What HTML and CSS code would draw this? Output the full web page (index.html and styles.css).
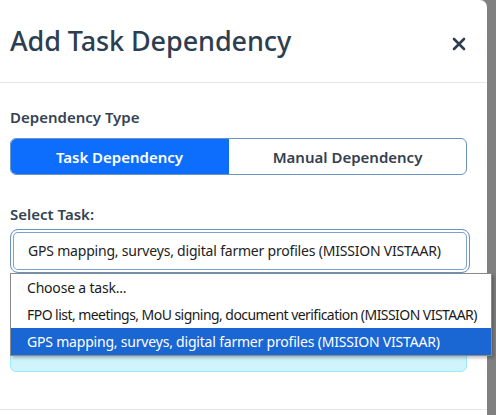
FILE: index.html
```html
<!DOCTYPE html>
<html>
<head>
<meta charset="utf-8">
<link rel="stylesheet" href="styles.css">
</head>
<body>
<div class="modal">
  <div class="modal-header">
    <h5 class="modal-title">Add Task Dependency</h5>
    <button class="close-btn" aria-label="Close">
      <svg width="14" height="14" viewBox="0 0 14 14"><path d="M2 2 L12 12 M12 2 L2 12" stroke="#2c3e50" stroke-width="2.6" stroke-linecap="round"/></svg>
    </button>
  </div>
  <div class="modal-body">
    <div class="field-label">Dependency Type</div>
    <div class="toggle">
      <div class="toggle-btn active">Task Dependency</div>
      <div class="toggle-btn">Manual Dependency</div>
    </div>
    <div class="field-label second">Select Task:</div>
    <div class="select-wrap">
      <div class="select">GPS mapping, surveys, digital farmer profiles (MISSION VISTAAR)</div>
      <div class="dropdown">
        <div class="option">Choose a task...</div>
        <div class="option long">FPO list, meetings, MoU signing, document verification (MISSION VISTAAR)</div>
        <div class="option selected">GPS mapping, surveys, digital farmer profiles (MISSION VISTAAR)</div>
      </div>
    </div>
    <div class="alert"></div>
  </div>
  <div class="modal-footer"></div>
</div>
</body>
</html>
```
FILE: styles.css
```css
html, body {
  margin: 0;
  padding: 0;
  background: #808080;
  overflow: hidden;
}
body {
  width: 496px;
  height: 415px;
  font-family: "Noto Sans", "Open Sans", sans-serif;
}
.modal {
  width: 487px;
  height: 415px;
  background: #fff;
  border-top-right-radius: 7px;
  box-sizing: border-box;
}
.modal-header {
  height: 83px;
  box-sizing: border-box;
  border-bottom: 1px solid #e4e7eb;
  display: flex;
  align-items: center;
  justify-content: space-between;
  padding: 0 21px 0 10px;
}
.modal-title {
  margin: 0;
  font-size: 27px;
  font-weight: 500;
  color: #2c3e50;
  letter-spacing: -0.1px;
  padding-bottom: 2px;
}
.close-btn {
  border: 0;
  background: none;
  padding: 0;
  width: 14px;
  height: 14px;
  margin-top: 6px;
  display: flex;
}
.modal-body {
  padding: 24px 10px 0 10px;
}
.field-label {
  font-size: 15px;
  font-weight: 600;
  color: #344354;
  line-height: 20px;
  margin-bottom: 11px;
}
.field-label.second {
  margin-top: 29px;
  margin-bottom: 5px;
}
.toggle {
  width: 457px;
  height: 37px;
  box-sizing: border-box;
  display: flex;
  border: 1px solid #6a92c2;
  border-radius: 6px;
  overflow: hidden;
}
.toggle-btn {
  flex: 1;
  display: flex;
  align-items: center;
  justify-content: center;
  font-size: 15px;
  font-weight: 600;
  color: #34404f;
}
.toggle-btn.active {
  background: #0d6efd;
  color: #fff;
  margin: -1px 0 -1px -1px;
  flex: 0 0 219px;
}
.select-wrap {
  position: relative;
}
.select {
  width: 460px;
  height: 44px;
  box-sizing: border-box;
  border: 1px solid #6d93c3;
  border-radius: 8px;
  box-shadow: inset 0 0 0 2px #fff, inset 0 0 0 3px #7d9fcc;
  display: flex;
  align-items: center;
  padding-left: 17px;
  padding-bottom: 1px;
  font-size: 14px;
  letter-spacing: -0.2px;
  color: #222;
  white-space: nowrap;
}
.dropdown {
  position: absolute;
  left: 0;
  top: 44px;
  width: 482px;
  box-sizing: border-box;
  background: #fff;
  border: 1px solid #8a8a8a;
  box-shadow: 2px 2px 3px rgba(0,0,0,0.25);
  z-index: 2;
}
.option {
  height: 27px;
  display: flex;
  align-items: center;
  padding-left: 16px;
  font-size: 14px;
  letter-spacing: -0.2px;
  color: #1a1a1a;
  white-space: nowrap;
}
.option.long {
  letter-spacing: -0.55px;
}
.option.selected {
  background: #1a66d3;
  color: #fff;
}
.alert {
  margin-top: 15px;
  width: 457px;
  height: 84px;
  box-sizing: border-box;
  background: #cff4fc;
  border: 1px solid #9eeaf9;
  border-radius: 6px;
}
.modal-footer {
  margin-top: 37px;
  border-top: 1px solid #e4e7eb;
}
```
